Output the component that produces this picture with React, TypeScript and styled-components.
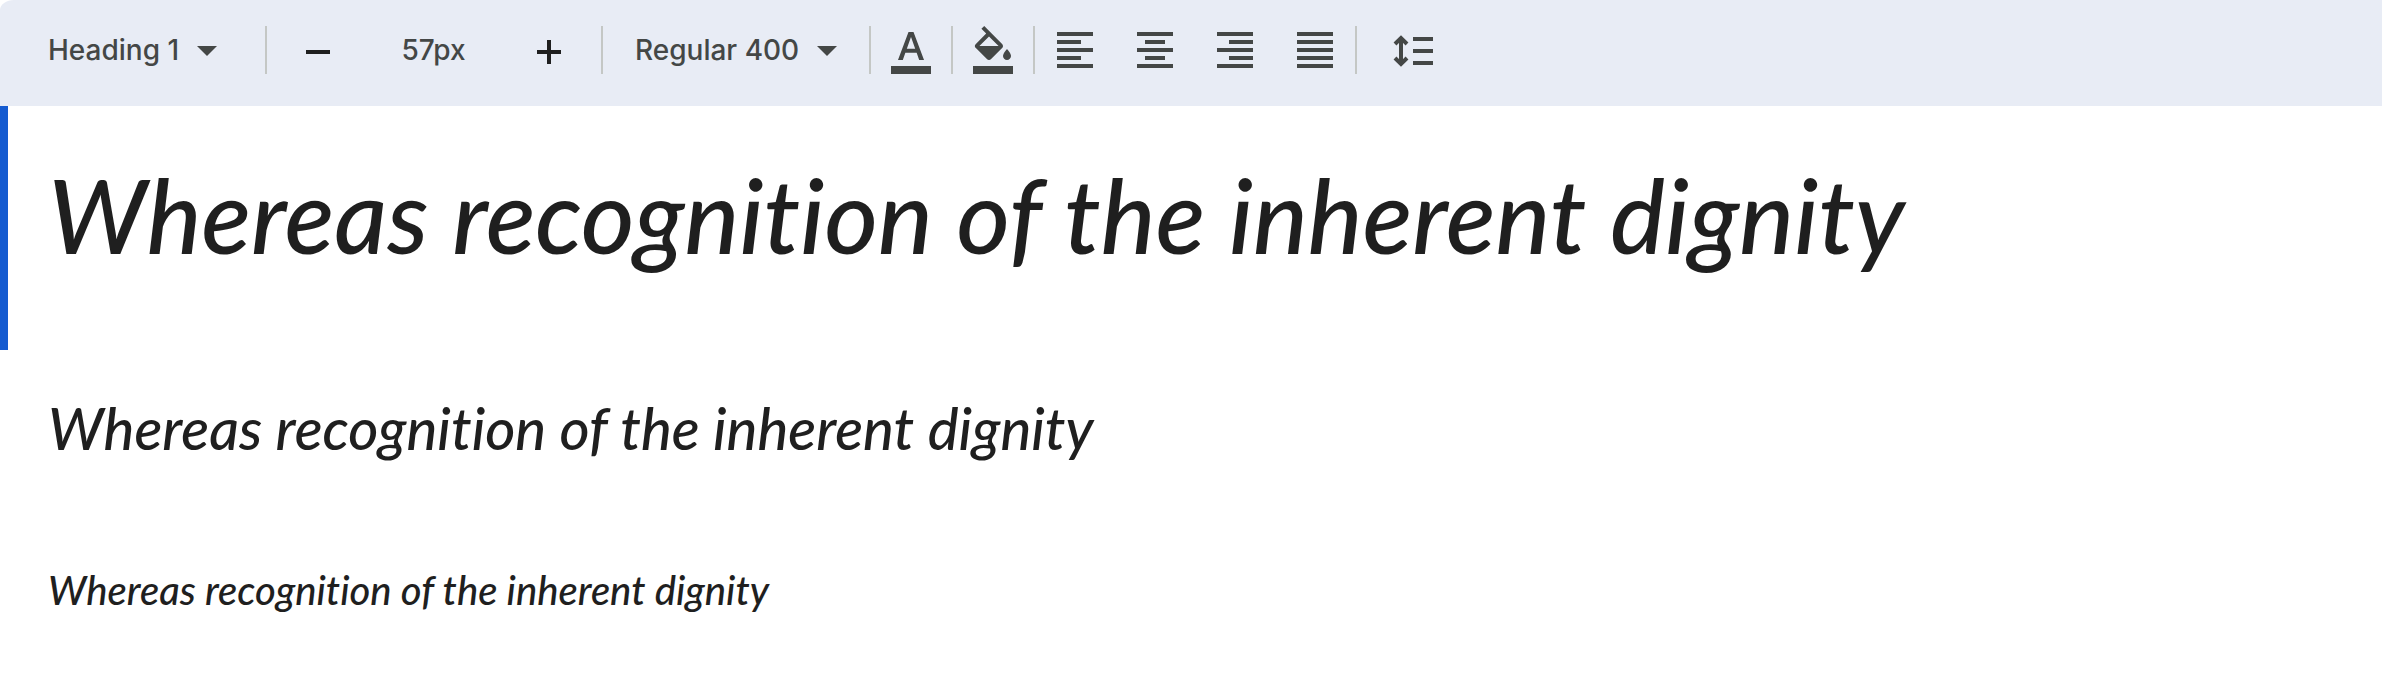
import React from "react";
import styled, { createGlobalStyle } from "styled-components";
import {
  MdArrowDropDown,
  MdFormatAlignCenter,
  MdFormatAlignJustify,
  MdFormatAlignLeft,
  MdFormatAlignRight,
  MdFormatColorFill,
  MdFormatColorText,
} from "react-icons/md";

const ink = "#444746";
const uiFont = '"Google Sans", Inter, "Open Sans", sans-serif';

const GlobalStyle = createGlobalStyle`
  *, *::before, *::after { box-sizing: border-box; }
  body { margin: 0; background: #ffffff; font-family: ${uiFont}; }
`;

const Toolbar = styled.div`
  display: flex;
  align-items: center;
  height: 106px;
  padding: 0 48px 6px;
  background: #e8ecf5;
  border-top-left-radius: 14px 10px;
`;

const Divider = styled.span`
  flex: none;
  width: 2px;
  height: 48px;
  background: #c4c7c5;
`;

const SelectBox = styled.div<{ $width: number; $before: number; $after: number }>`
  flex: none;
  display: grid;
  align-items: center;
  width: ${(p) => p.$width}px;
  margin-left: ${(p) => p.$before}px;
  margin-right: ${(p) => p.$after}px;

  > * {
    grid-area: 1 / 1;
  }

  svg {
    justify-self: end;
    pointer-events: none;
    width: 48px;
    height: 48px;
    color: ${ink};
  }
`;

const Select = styled.select`
  appearance: none;
  width: 100%;
  height: 48px;
  padding: 0;
  border: 0;
  background: transparent;
  color: ${ink};
  font: 500 28px/48px ${uiFont};
`;

const SizeInput = styled.input`
  flex: none;
  width: 113px;
  height: 48px;
  margin: 0 35px;
  padding: 0;
  border: 0;
  background: transparent;
  color: ${ink};
  text-align: center;
  font: 500 28px/48px ${uiFont};
`;

const IconButton = styled.button<{ $dark?: boolean }>`
  flex: none;
  display: grid;
  place-items: center;
  width: 48px;
  height: 48px;
  padding: 0;
  border: 0;
  background: transparent;
  color: ${(p) => (p.$dark ? "#1f1f1f" : ink)};

  svg {
    display: block;
    width: 48px;
    height: 48px;
  }
`;

const Stepper = styled.div`
  display: flex;
  align-items: center;
  padding: 0 28px 0 27px;
`;

const Group = styled.div<{ $pad: number }>`
  display: flex;
  gap: 32px;
  padding: 0 ${(p) => p.$pad}px;
`;

const Sample = styled.div<{ $active?: boolean }>`
  padding: 40px;
  border-left: 8px solid ${(p) => (p.$active ? "#155bd0" : "transparent")};
`;

const Line = styled.p<{ $size: number; $leading: number; $descent: number }>`
  margin: 0;
  padding-bottom: ${(p) => p.$descent}px;
  color: #1f1f1f;
  white-space: nowrap;
  font-family: Satisfy, Lato, "Open Sans", sans-serif;
  font-style: italic;
  font-weight: 500;
  font-variant-ligatures: none;
  font-size: ${(p) => p.$size}px;
  line-height: ${(p) => p.$leading}px;
`;

const text = "Whereas recognition of the inherent dignity";

const samples = [
  { size: 103, leading: 136, descent: 28, active: true },
  { size: 58, leading: 76, descent: 16 },
  { size: 40, leading: 56, descent: 8 },
];

const alignments = [
  { label: "Align left", Icon: MdFormatAlignLeft },
  { label: "Align center", Icon: MdFormatAlignCenter },
  { label: "Align right", Icon: MdFormatAlignRight },
  { label: "Justify", Icon: MdFormatAlignJustify },
];

export default function App() {
  return (
    <>
      <GlobalStyle />
      <Toolbar role="toolbar" aria-label="Text formatting">
        <SelectBox $width={183} $before={0} $after={34}>
          <Select aria-label="Text style" defaultValue="Heading 1">
            <option>Heading 1</option>
          </Select>
          <MdArrowDropDown />
        </SelectBox>
        <Divider />
        <Stepper>
          <IconButton $dark aria-label="Decrease size">
            <svg viewBox="0 0 24 24" fill="currentColor">
              <path d="M6 12h12v2H6z" />
            </svg>
          </IconButton>
          <SizeInput aria-label="Font size" defaultValue="57px" />
          <IconButton $dark aria-label="Increase size">
            <svg viewBox="0 0 24 24" fill="currentColor">
              <path d="M11 7h2v5h5v2h-5v5h-2v-5H6v-2h5z" />
            </svg>
          </IconButton>
        </Stepper>
        <Divider />
        <SelectBox $width={216} $before={32} $after={18}>
          <Select aria-label="Font weight" defaultValue="Regular 400">
            <option>Regular 400</option>
          </Select>
          <MdArrowDropDown />
        </SelectBox>
        <Divider />
        <Group $pad={16}>
          <IconButton aria-label="Text color">
            <MdFormatColorText />
          </IconButton>
        </Group>
        <Divider />
        <Group $pad={16}>
          <IconButton aria-label="Background color">
            <MdFormatColorFill />
          </IconButton>
        </Group>
        <Divider />
        <Group $pad={16}>
          {alignments.map(({ label, Icon }) => (
            <IconButton key={label} aria-label={label}>
              <Icon />
            </IconButton>
          ))}
        </Group>
        <Divider />
        <Group $pad={32}>
          <IconButton aria-label="Line height">
            <svg viewBox="0 0 24 24" fill="currentColor">
              <path d="M12 5.5h10v2H12zM12 11.5h10v2H12zM12 17.5h10v2H12z" />
              <path
                d="M6 6v13M3 9l3-3 3 3M3 16l3 3 3-3"
                fill="none"
                stroke="currentColor"
                strokeWidth="2"
              />
            </svg>
          </IconButton>
        </Group>
      </Toolbar>
      <main>
        {samples.map((s) => (
          <Sample key={s.size} $active={s.active}>
            <Line $size={s.size} $leading={s.leading} $descent={s.descent}>
              {text}
            </Line>
          </Sample>
        ))}
      </main>
    </>
  );
}
